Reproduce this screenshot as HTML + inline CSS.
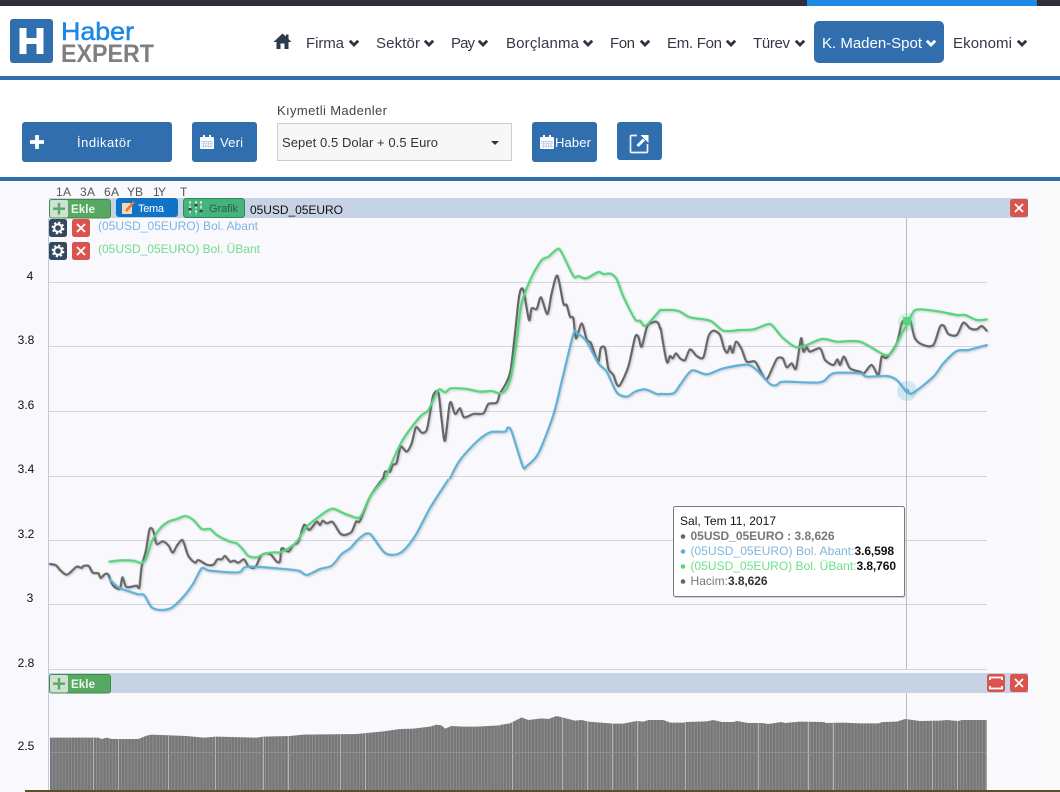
<!DOCTYPE html>
<html lang="tr">
<head>
<meta charset="utf-8">
<title>HaberExpert</title>
<style>
html,body{margin:0;padding:0;width:1060px;height:792px;overflow:hidden;background:#fff}
svg{display:block}
text{font-family:"Liberation Sans",sans-serif}
.nav{font-size:15px;fill:#333a45}
.wh{fill:#fff}
.line{fill:none;stroke-width:6.600;stroke-linejoin:round;stroke-linecap:round}
.series{filter:drop-shadow(1px 1px 1px rgba(0,0,0,.2))}
.tt{font-size:12px}
.ax{font-size:12px;fill:#111;text-anchor:middle}
.rg{font-size:12px;fill:#555}
</style>
</head>
<body>
<svg width="1060" height="792" viewBox="0 0 1060 792" xmlns="http://www.w3.org/2000/svg">
<defs>
<pattern id="bars" width="3.13" height="10" patternUnits="userSpaceOnUse" x="50">
<rect width="3.13" height="10" fill="#999"/>
<rect width="2.500" height="10" fill="#777"/>
</pattern>
<clipPath id="vol">
<polygon transform="translate(40 700) scale(.33333)" points="30,113 175,113 185,117 200,113 215,117 295,117 320,107 335,104 440,108 490,113 530,110 650,113 670,110 750,108 790,104 950,102 990,98 1030,94 1080,87 1120,86 1170,80 1190,74 1205,76 1215,86 1235,78 1270,80 1310,80 1381,76 1381,270 30,270"/>
<polygon transform="translate(500 700) scale(.33333)" points="0,75 30,70 65,52 85,60 125,55 145,57 170,48 225,62 245,60 265,65 340,71 370,71 410,63 430,65 445,60 490,60 510,68 550,68 560,66 620,64 640,60 665,66 700,66 710,63 745,69 785,69 805,72 845,66 855,69 900,65 970,66 980,69 1030,68 1080,70 1135,70 1148,66 1190,65 1215,57 1260,63 1320,62 1340,60 1375,63 1385,60 1460,60 1460,270 0,270"/>
</clipPath>
<g id="chev"><path d="M.8 1.800 5 6 9.200 1.800" fill="none" stroke-width="2.800"/></g>
<g id="cal">
<rect x="0" y="2" width="14" height="12" rx="1" fill="#fff"/>
<rect x="3" y="0" width="2" height="3" fill="#fff"/><rect x="9" y="0" width="2" height="3" fill="#fff"/>
<path d="M1 6.500H13M1 8.800H13M1 11.100H13M3.500 6V13M6 6V13M8.500 6V13M11 6V13" stroke="#a9c4e4" stroke-width=".7" fill="none"/>
</g>
<g id="gear">
<rect width="18" height="18" rx="2.500" fill="#34495e"/>
<circle cx="9" cy="9" r="3.800" fill="none" stroke="#fff" stroke-width="2"/>
<circle cx="9" cy="9" r="5.500" fill="none" stroke="#fff" stroke-width="1.700" stroke-dasharray="2.200 2.120"/>
</g>
<g id="redx">
<rect width="18" height="18" rx="2.500" fill="#d9534f"/>
<path d="M5 5 13 13M13 5 5 13" stroke="#fff" stroke-width="1.800" fill="none"/>
</g>
<g id="ekle">
<rect x=".5" y=".5" width="61" height="18.500" rx="2.500" fill="#57a863" stroke="#3f8a4c"/>
<rect x="1" y="1" width="18" height="17.500" rx="2" fill="#cfe1d3"/>
<path d="M10 4V15.500M4 9.700H16" stroke="#57a863" stroke-width="2.400" fill="none"/>
</g>
</defs>

<!-- page backgrounds -->
<rect width="1060" height="792" fill="#fff"/>
<rect y="181" width="1060" height="611" fill="#fafafa"/>
<rect x="6" y="181" width="1027" height="611" fill="#f8f8fd"/>

<!-- top bar -->
<rect width="1060" height="6" fill="#2e2e3a"/>
<rect x="807" width="230" height="6" fill="#1e88e5"/>
<rect y="76" width="1060" height="4" fill="#306eae"/>
<rect y="177" width="1060" height="4" fill="#306eae"/>

<!-- logo -->
<rect x="10" y="19" width="43" height="44" rx="3" fill="#306eae"/>
<path d="M19.500 28H26.500V38H36.500V28H43.500V54H36.500V44H26.500V54H19.500Z" fill="#fff"/>
<text x="61" y="40" font-size="25" fill="#1e88e5" stroke="#1e88e5" stroke-width=".5" textLength="73" lengthAdjust="spacingAndGlyphs">Haber</text>
<text x="61" y="62" font-size="25" font-weight="700" fill="#7f7f7f" textLength="93" lengthAdjust="spacingAndGlyphs">EXPERT</text>

<!-- nav -->
<path d="M282.500 33.500 273.500 42H276.500V49H280.500V43.500H284.500V49H288.500V42H291.500L288.500 39V34.500H286V36.500Z" fill="#2b3a4f"/>
<text class="nav" x="306" y="48" textLength="38">Firma</text>
<use href="#chev" x="349" y="39" stroke="#2b3442"/>
<text class="nav" x="376" y="48" textLength="44">Sektör</text>
<use href="#chev" x="424" y="39" stroke="#2b3442"/>
<text class="nav" x="451" y="48" textLength="24">Pay</text>
<use href="#chev" x="478" y="39" stroke="#2b3442"/>
<text class="nav" x="506" y="48" textLength="73">Borçlanma</text>
<use href="#chev" x="583" y="39" stroke="#2b3442"/>
<text class="nav" x="610" y="48" textLength="25">Fon</text>
<use href="#chev" x="640" y="39" stroke="#2b3442"/>
<text class="nav" x="667" y="48" textLength="55">Em. Fon</text>
<use href="#chev" x="726" y="39" stroke="#2b3442"/>
<text class="nav" x="753" y="48" textLength="37">Türev</text>
<use href="#chev" x="795" y="39" stroke="#2b3442"/>
<rect x="814" y="21" width="130" height="42" rx="5" fill="#306eae"/>
<text class="nav" style="fill:#fff" x="822" y="48" textLength="100">K. Maden-Spot</text>
<use href="#chev" x="926" y="39" stroke="#fff"/>
<text class="nav" x="953" y="48" textLength="59">Ekonomi</text>
<use href="#chev" x="1017" y="39" stroke="#2b3442"/>

<!-- toolbar -->
<rect x="22" y="122" width="150" height="40" rx="3" fill="#306eae"/>
<path d="M37 135V149M30 142H44" stroke="#fff" stroke-width="3.800" fill="none"/>
<text class="wh" x="77" y="147" font-size="13" textLength="54">İndikatör</text>
<rect x="192" y="122" width="65" height="40" rx="3" fill="#306eae"/>
<use href="#cal" x="200" y="135"/>
<text class="wh" x="220" y="147" font-size="13" textLength="23">Veri</text>
<text x="277" y="115" font-size="13" fill="#444" textLength="110">Kıymetli Madenler</text>
<rect x="277.500" y="123.500" width="234" height="37" fill="#f7f7f7" stroke="#ccc"/>
<text x="282" y="147" font-size="13" fill="#333" textLength="156">Sepet 0.5 Dolar + 0.5 Euro</text>
<path d="M491 141H499L495 145Z" fill="#333"/>
<rect x="532" y="122" width="65" height="40" rx="3" fill="#306eae"/>
<use href="#cal" x="540" y="135"/>
<text class="wh" x="555" y="147" font-size="13" textLength="36">Haber</text>
<rect x="617" y="122" width="45" height="38" rx="3" fill="#306eae"/>
<path d="M637 135.500H631.500Q630.500 135.500 630.500 136.500V151.500Q630.500 152.500 631.500 152.500H646.500Q647.500 152.500 647.500 151.500V144" fill="none" stroke="#eef3f9" stroke-width="1.700"/>
<path d="M637.500 146 644 139.500" stroke="#fff" stroke-width="3" fill="none"/>
<path d="M640.500 135H648.500V143Z" fill="#fff"/>

<!-- range selector -->
<text class="rg" x="56" y="196" textLength="15">1A</text>
<text class="rg" x="80" y="196" textLength="15">3A</text>
<text class="rg" x="104" y="196" textLength="15">6A</text>
<text class="rg" x="127" y="196" textLength="16">YB</text>
<text class="rg" x="153" y="196" textLength="13">1Y</text>
<text class="rg" x="180" y="196">T</text>

<!-- grid + axis -->
<path d="M49 282.500H987M49 346.500H987M49 411.500H987M49 476.500H987M49 540.500H987M49 604.500H987M49 669.500H987" stroke="#d4d4dc" fill="none"/>
<path d="M48.500 218V790" stroke="#b8cde2" fill="none"/>
<path d="M906.500 218V669M906.500 692V720" stroke="#bdbdbd" fill="none"/>

<text class="ax" x="30" y="280">4</text>
<text class="ax" x="26" y="344">3.8</text>
<text class="ax" x="26" y="409">3.6</text>
<text class="ax" x="26" y="473">3.4</text>
<text class="ax" x="26" y="538">3.2</text>
<text class="ax" x="30" y="602">3</text>
<text class="ax" x="26" y="667">2.8</text>
<text class="ax" x="26" y="750">2.5</text>

<!-- volume -->
<g clip-path="url(#vol)">
<rect x="50" y="700" width="937" height="90" fill="url(#bars)"/>
<path d="M93.500 700V790M118.500 700V790M168.500 700V790M215.500 700V790M263.500 700V790M288.500 700V790M340.500 700V790M365.500 700V790M512.500 700V790M562.500 700V790M587.500 700V790M612.500 700V790M637.500 700V790M685.500 700V790M758.500 700V790M808.500 700V790M833.500 700V790M907.500 700V790M932.500 700V790M957.500 700V790" stroke="#b4b4b4" fill="none"/>
<path d="M50 752.500H987" stroke="#999" stroke-opacity=".7"/>
</g>

<!-- series -->
<g class="series">
<g transform="translate(40 480) scale(.33333)">
<polyline class="line" stroke="#666" points="30,252 48,256 60,270 78,284 90,278 110,260 125,264 130,258 146,258 158,278 175,280 182,294 195,282 205,284 215,310 225,322 240,326 247,292 258,320 275,320 290,317 298,322 305,260 318,210 328,150 336,146 342,160 350,192 368,184 385,196 398,218 410,198 425,180 432,190 445,228 465,248 475,240 500,254 520,254 532,238 545,238 555,228 570,245 582,242 595,248 612,238 625,258 645,262 665,225 690,222 710,245 720,243 725,205 745,215 760,195 775,185 792,135 808,150 830,125 840,135 848,122 860,130 878,126 900,160 915,165 935,155 948,125 960,122 990,50 1029,-6"/>
<polyline class="line" stroke="#5eb1d8" points="208,297 235,322 270,335 295,343 312,345 335,382 365,390 395,383 430,350 460,310 485,265 510,272 595,277 620,260 710,265 775,272 800,285 840,267 875,257 905,222 930,205 960,173 990,162 1035,219 1080,219 1125,168 1170,84 1224,0"/>
<polyline class="line" stroke="#55d67b" points="208,245 240,241 280,242 305,249 318,235 335,185 360,145 385,125 410,117 435,108 460,120 485,147 510,147 530,165 570,185 590,190 610,210 625,228 650,232 670,222 700,217 720,217 745,205 770,185 800,140 830,115 860,93 880,86 905,97 930,107 960,111 990,50 1035,-6"/>
</g>
<g transform="translate(340 240) scale(.33333)">
<polyline class="line" stroke="#666" points="130,715 135,695 150,695 158,675 170,668 182,620 200,635 215,610 228,562 245,578 260,570 270,520 280,465 295,458 305,540 315,602 330,488 345,522 360,505 372,532 400,522 430,520 445,492 470,488 480,460 498,430 512,390 525,280 538,165 550,150 567,240 575,205 590,207 603,172 622,222 635,160 652,107 670,190 680,195 690,230 700,235 708,295 725,250 740,298 752,308 760,330 775,365 782,325 795,325 805,385 820,405 830,432 840,435 865,380 885,292 895,290 905,320 922,258 945,245 955,250 960,265"/>
<polyline class="line" stroke="#5eb1d8" points="330,715 360,660 410,605 450,577 495,575 503,563 515,575 548,678 560,678 595,640 640,525 665,425 700,283 712,280 740,305 775,370 800,395 830,457 860,470 885,455 915,448 950,462 960,462"/>
<polyline class="line" stroke="#55d67b" points="135,715 185,605 240,530 265,510 295,450 315,457 332,445 380,447 420,455 455,453 480,460 500,445 515,400 530,300 545,190 575,110 605,60 625,50 652,27 665,38 700,108 715,108 738,115 775,96 790,102 812,101 830,118 850,170 885,238 900,242 917,257 960,210"/>
</g>
<g transform="translate(640 290) scale(.33333)">
<polyline class="line" stroke="#666" points="62,115 80,215 90,198 98,205 108,190 120,205 135,210 150,178 170,198 190,202 205,140 220,122 240,135 252,175 262,188 270,168 278,188 288,155 305,178 320,215 345,215 365,250 380,268 400,228 412,205 428,205 440,232 455,220 468,235 483,145 490,185 500,172 510,185 540,175 555,210 580,225 592,208 600,225 612,200 630,235 660,245 672,250 695,225 715,255 725,200 740,203 770,160 785,100 795,90 810,90 825,145 850,165 880,165 900,110 912,108 925,132 950,135 970,98 990,115 1010,118 1025,108 1040,122"/>
<polyline class="line" stroke="#5eb1d8" points="60,312 100,310 120,285 155,242 200,253 250,235 320,224 350,240 390,282 410,285 430,275 540,277 580,250 660,250 680,260 740,258 770,270 800,305 820,308 880,260 910,220 950,183 985,180 1040,165"/>
<polyline class="line" stroke="#55d67b" points="60,60 100,60 120,65 150,82 210,92 250,122 300,120 340,118 385,102 400,110 430,145 475,172 545,147 590,155 660,155 735,195 760,180 785,130 800,105 820,65 840,58 900,65 950,75 975,75 1010,90 1040,88"/>
</g>
</g>

<!-- markers -->
<circle cx="907" cy="322" r="9" fill="#55d67b" fill-opacity=".22"/>
<rect x="903" y="317" width="8" height="8" fill="#55d67b"/>
<circle cx="907" cy="391" r="10" fill="#5eb1d8" fill-opacity=".25"/>
<path d="M907 388 910 391 907 394 904 391Z" fill="#5eb1d8"/>

<!-- panel 1 toolbar -->
<rect x="49" y="198" width="979" height="20" fill="#c5d3e4"/>
<use href="#ekle" x="49" y="199"/>
<text x="71" y="213" font-size="11.500" font-weight="700" fill="#eef6ef" textLength="24">Ekle</text>
<rect x="116" y="198" width="62" height="19" rx="3" fill="#0f74c8"/>
<rect x="122" y="203" width="10" height="11" fill="#f0d9b0"/>
<path d="M126 211 134 202" stroke="#e8743a" stroke-width="2.500" fill="none"/>
<text class="wh" x="138" y="212" font-size="11" textLength="26">Tema</text>
<rect x="183.500" y="198.500" width="61" height="19" rx="3" fill="#47b27c" stroke="#1e8c5e"/>
<path d="M190 201V215M196 201V215M201 201V215" stroke="#fff" stroke-width="1.200" stroke-dasharray="3 1.500"/>
<rect x="188.500" y="208" width="3" height="2.500" fill="#2f4a3c"/><rect x="194.500" y="204" width="3" height="2.500" fill="#2f4a3c"/><rect x="199.500" y="210" width="3" height="2.500" fill="#2f4a3c"/>
<text x="209" y="212" font-size="11" fill="#2f5f4a" textLength="29">Grafik</text>
<text x="250" y="214" font-size="12" fill="#111" textLength="93">05USD_05EURO</text>
<use href="#redx" x="1010" y="199"/>

<!-- legend rows -->
<use href="#gear" x="49" y="219"/>
<use href="#redx" x="72" y="219"/>
<text x="98" y="230" font-size="12" fill="#7cb5e0" textLength="160">(05USD_05EURO) Bol. Abant</text>
<use href="#gear" x="49" y="242"/>
<use href="#redx" x="72" y="242"/>
<text x="98" y="253" font-size="12" fill="#6fdd8f" textLength="162">(05USD_05EURO) Bol. ÜBant</text>

<!-- panel 2 toolbar -->
<rect x="49" y="673" width="979" height="20" fill="#c5d3e4"/>
<use href="#ekle" x="49" y="674"/>
<text x="71" y="688" font-size="11.500" font-weight="700" fill="#eef6ef" textLength="24">Ekle</text>
<rect x="987" y="674" width="18" height="18" rx="2.500" fill="#d9534f"/>
<path d="M990 680V677.500H1002V680M990 686V688.500H1002V686" fill="none" stroke="#fff" stroke-width="1.800"/>
<use href="#redx" x="1010" y="674"/>

<!-- tooltip -->
<rect x="673.500" y="506.500" width="231" height="90" rx="2" fill="#000" fill-opacity=".15" transform="translate(1 1.500)"/>
<rect x="673.500" y="506.500" width="231" height="90" rx="2" fill="#fff" stroke="#7a7a7a"/>
<text class="tt" x="680" y="525" fill="#111" textLength="96">Sal, Tem 11, 2017</text>
<circle cx="683" cy="536.500" r="2.300" fill="#666"/>
<text class="tt" x="690.500" y="540" font-weight="700" fill="#777" textLength="144">05USD_05EURO : 3.8,626</text>
<circle cx="683" cy="551.500" r="2.300" fill="#5eb1d8"/>
<text class="tt" x="690.500" y="555" fill="#7cb5e0" textLength="164">(05USD_05EURO) Bol. Abant:</text>
<text class="tt" x="854.500" y="555" font-weight="700" fill="#111" textLength="39.500">3.6,598</text>
<circle cx="683" cy="566.500" r="2.300" fill="#55d67b"/>
<text class="tt" x="690.500" y="570" fill="#6fdd8f" textLength="166">(05USD_05EURO) Bol. ÜBant:</text>
<text class="tt" x="856.500" y="570" font-weight="700" fill="#111" textLength="39.500">3.8,760</text>
<circle cx="683" cy="581.500" r="2.300" fill="#666"/>
<text class="tt" x="690.500" y="585" fill="#777" textLength="37.500">Hacim:</text>
<text class="tt" x="728" y="585" font-weight="700" fill="#333" textLength="39.500">3.8,626</text>

<!-- bottom strip -->
<rect x="25" y="790" width="1035" height="2" fill="#5a4f2c"/>
</svg>
<script>
document.querySelectorAll('polyline.line').forEach(function(pl){
  var a=pl.getAttribute('points').trim().split(/\s+/).map(function(s){return s.split(',').map(Number)});
  var d='M'+a[0][0]+' '+a[0][1],k=1/7;
  for(var i=0;i<a.length-1;i++){
    var p0=a[Math.max(i-1,0)],p1=a[i],p2=a[i+1],p3=a[Math.min(i+2,a.length-1)];
    d+='C'+(p1[0]+(p2[0]-p0[0])*k)+' '+(p1[1]+(p2[1]-p0[1])*k)+' '+(p2[0]-(p3[0]-p1[0])*k)+' '+(p2[1]-(p3[1]-p1[1])*k)+' '+p2[0]+' '+p2[1];
  }
  var n=document.createElementNS('http://www.w3.org/2000/svg','path');
  n.setAttribute('class','line');n.setAttribute('stroke',pl.getAttribute('stroke'));n.setAttribute('d',d);
  pl.parentNode.replaceChild(n,pl);
});
</script>
</body>
</html>
